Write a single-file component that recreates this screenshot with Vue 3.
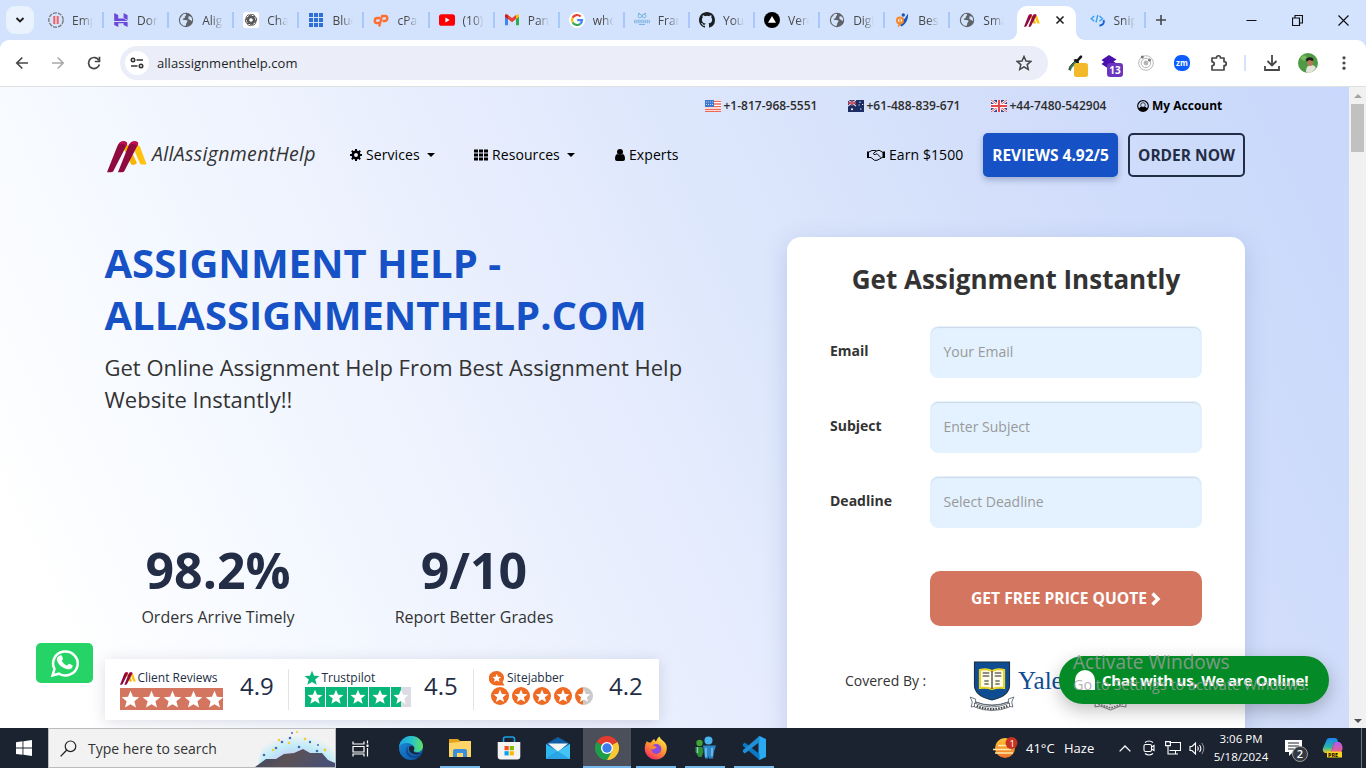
<script setup>
const tabs = [
  { icon: 'pause', label: 'Emp' },
  { icon: 'hostinger', label: 'Dom' },
  { icon: 'globe', label: 'Align' },
  { icon: 'gpt', label: 'Chat' },
  { icon: 'grid', label: 'Blue' },
  { icon: 'cpanel', label: 'cPan' },
  { icon: 'youtube', label: '(10)' },
  { icon: 'gmail', label: 'Pane' },
  { icon: 'google', label: 'who' },
  { icon: 'franken', label: 'Fran' },
  { icon: 'github', label: 'Your' },
  { icon: 'vercel', label: 'Verc' },
  { icon: 'globe', label: 'Digi' },
  { icon: 'pb', label: 'Best' },
  { icon: 'globe', label: 'Sma' },
  { icon: 'brand', label: '', active: true },
  { icon: 'snip', label: 'Snip' },
]
const phones = [
  { flag: 'us', text: '+1-817-968-5551' },
  { flag: 'au', text: '+61-488-839-671' },
  { flag: 'gb', text: '+44-7480-542904' },
]
const fields = [
  { label: 'Email', hint: 'Your Email' },
  { label: 'Subject', hint: 'Enter Subject' },
  { label: 'Deadline', hint: 'Select Deadline' },
]
const apps = [
  { icon: 'edge' },
  { icon: 'explorer', open: true },
  { icon: 'store' },
  { icon: 'mail' },
  { icon: 'chrome', open: true, current: true },
  { icon: 'firefox', open: true },
  { icon: 'people', open: true },
  { icon: 'vscode', open: true },
]
</script>

<template>
  <div class="screen">
    <svg class="sprite" width="0" height="0" aria-hidden="true">
      <defs>
        <linearGradient id="edgeG" x1="0" y1="0" x2="1" y2="0"><stop offset="0" stop-color="#1aa3e8" /><stop offset=".55" stop-color="#2cc4c9" /><stop offset="1" stop-color="#5fe05a" /></linearGradient>
        <linearGradient id="edgeB" x1="0" y1="0" x2="1" y2="1"><stop offset="0" stop-color="#1b8fdc" /><stop offset="1" stop-color="#0c4f9e" /></linearGradient>
        <linearGradient id="ffG" x1=".8" y1="0" x2=".2" y2="1"><stop offset="0" stop-color="#fff04a" /><stop offset=".45" stop-color="#ff9a2b" /><stop offset="1" stop-color="#f4246b" /></linearGradient>
        <linearGradient id="sunG" x1="0" y1="0" x2="0" y2="1"><stop offset="0" stop-color="#ffc636" /><stop offset="1" stop-color="#f0702c" /></linearGradient>
        <linearGradient id="copA" x1="0" y1="0" x2="0" y2="1"><stop offset="0" stop-color="#1a86f2" /><stop offset=".6" stop-color="#28b5a5" /><stop offset="1" stop-color="#e9c82a" /></linearGradient>
        <linearGradient id="copB" x1="0" y1="0" x2="0" y2="1"><stop offset="0" stop-color="#b05cf0" /><stop offset="1" stop-color="#f0607a" /></linearGradient>
        <radialGradient id="skyG" cx=".5" cy=".8" r=".7"><stop offset="0" stop-color="#c9a9ee" /><stop offset=".5" stop-color="#c3c9f6" /><stop offset=".78" stop-color="#c2edf8" /><stop offset="1" stop-color="#f2f2f2" /></radialGradient>
        <linearGradient id="hillG" x1="0" y1="0" x2="1" y2=".2"><stop offset="0" stop-color="#3c4663" /><stop offset=".5" stop-color="#5b5256" /><stop offset="1" stop-color="#4a5073" /></linearGradient>
      </defs>
      <symbol id="i-pause" viewBox="0 0 16 16"><circle cx="8" cy="8" r="7.2" fill="none" stroke="#777" stroke-width="1.3" stroke-dasharray="4 1.1" /><path d="M6.3 4v8M9.7 4v8" stroke="#f26161" stroke-width="2" /></symbol>
      <symbol id="i-hostinger" viewBox="0 0 16 16"><path d="M1.2 1l4 2v3.6h5.3L14.8 9H1.2zM10.6 1l4 2.200V8l-4-2zM1.200 9.900h13.400V15l-4-2v-1.700H5.300V15l-4.100-2z" fill="#6b48d8" /></symbol>
      <symbol id="i-globe" viewBox="0 0 16 16"><circle cx="8" cy="8" r="7.200" fill="#5f6368" /><path d="M7 1.800c2 .4 1 2 .2 2.400-1 .5.2 1.200-.6 1.900-.8.600-2 .4-1.700 1.600l3.800.6c1.100.2 1 1.600.1 2.100-.8.500-.5 2.400-1.400 3.700C4 13.800 2 11 2 8c0-1.600.8-3 1.800-4.100.7-.4 1-1.900 3.200-2.100zM10.500 4.500c1-.5 2-.1 2.900.7.6 1 .8 2.600.6 3.600-.9.600-1.200-.9-2.200-1-1-.1-1.800-1.200-1.300-3.300z" fill="#d3e3fd" /></symbol>
      <symbol id="i-gpt" viewBox="0 0 16 16"><rect width="16" height="16" rx="2.500" fill="#fff" /><g fill="none" stroke="#444" stroke-width=".8"><rect x="5.800" y="2.300" width="6" height="9" rx="3" /><rect x="5.800" y="2.300" width="6" height="9" rx="3" transform="rotate(60 8 8)" /><rect x="5.800" y="2.300" width="6" height="9" rx="3" transform="rotate(120 8 8)" /><rect x="5.800" y="2.300" width="6" height="9" rx="3" transform="rotate(180 8 8)" /><rect x="5.800" y="2.300" width="6" height="9" rx="3" transform="rotate(240 8 8)" /><rect x="5.800" y="2.300" width="6" height="9" rx="3" transform="rotate(300 8 8)" /></g></symbol>
      <symbol id="i-grid" viewBox="0 0 16 16"><path d="M1 1h4v4H1zM6 1h4v4H6zM11 1h4v4h-4zM1 6h4v4H1zM6 6h4v4H6zM11 6h4v4h-4zM1 11h4v4H1zM6 11h4v4H6zM11 11h4v4h-4z" fill="#2f70d6" /></symbol>
      <symbol id="i-cpanel" viewBox="0 0 16 16"><g fill="none" stroke="#ff6c2c" stroke-width="2.300" stroke-linejoin="round"><path d="M7 6H4C1.500 6 .7 11 3.300 11H6" /><path d="M6.200 14.500L9 4h3.200c3.300 0 2.600 5-.7 5H9.500" /></g></symbol>
      <symbol id="i-youtube" viewBox="0 0 16 16"><rect y="2.300" width="16" height="11.500" rx="2.600" fill="#f00" /><path d="M6.400 5.500v5L10.700 8z" fill="#fff" /></symbol>
      <symbol id="i-gmail" viewBox="0 0 16 16"><path d="M1 4v9.300h3V6z" fill="#4285f4" /><path d="M15 4v9.300h-3V6z" fill="#34a853" /><path d="M1 5.500V3.800C1 2 3 2 4 3l4 3 4-3v4L8 10.300 4 7z" fill="#ea4335" /><path d="M1 3.800C1 2.200 3 2 4 3v4L1 5z" fill="#c5221f" /><path d="M15 3.800C15 2.200 13 2 12 3v4l3-2z" fill="#fbbc04" /></symbol>
      <symbol id="i-google" viewBox="0 0 16 16"><circle cx="8" cy="8" r="8" fill="#fff" /><g fill="none" stroke-width="2.200"><path d="M11.600 4.500A5 5 0 0 0 3.600 5.700" stroke="#ea4335" /><path d="M3.600 5.700A5 5 0 0 0 3.700 10.500" stroke="#fbbc05" /><path d="M3.700 10.500A5 5 0 0 0 11.300 11.800" stroke="#34a853" /><path d="M11.300 11.800A5 5 0 0 0 13 8.200H8.200" stroke="#4285f4" /></g></symbol>
      <symbol id="i-franken" viewBox="0 0 16 16"><g fill="none" stroke="#69a7d8" stroke-width="1" opacity=".8"><circle cx="5.800" cy="4" r="1.800" /><circle cx="10.200" cy="4" r="1.800" /><path d="M4 1.500h2M10 1.500h2M5 12.500h6" /><path d="M0 9.500h16" stroke-width="3.400" stroke-dasharray="1.500 .6" opacity=".85" /></g></symbol>
      <symbol id="i-github" viewBox="0 0 16 16"><path d="M8 0C3.580 0 0 3.580 0 8c0 3.540 2.290 6.530 5.470 7.590.4.070.55-.17.55-.38 0-.19-.01-.82-.01-1.490-2.010.37-2.530-.49-2.690-.94-.09-.23-.48-.94-.82-1.130-.28-.15-.68-.52-.01-.53.63-.01 1.080.58 1.230.82.72 1.210 1.870.87 2.330.66.070-.52.28-.87.51-1.070-1.780-.2-3.640-.89-3.640-3.950 0-.87.31-1.590.82-2.150-.08-.2-.36-1.020.08-2.120 0 0 .67-.21 2.200.82a7.600 7.600 0 0 1 4 0c1.530-1.040 2.200-.82 2.200-.82.44 1.100.16 1.920.08 2.120.51.56.82 1.270.82 2.150 0 3.070-1.870 3.750-3.650 3.950.29.25.54.73.54 1.480 0 1.070-.01 1.930-.01 2.200 0 .21.15.46.55.38A8.010 8.010 0 0 0 16 8c0-4.420-3.580-8-8-8z" fill="#1b1f24" /></symbol>
      <symbol id="i-vercel" viewBox="0 0 16 16"><circle cx="8" cy="8" r="8" /><path d="M8 4l4 6.800H4z" fill="#fff" /></symbol>
      <symbol id="i-pb" viewBox="0 0 16 16"><path d="M8 6l2.500 1L14 1.500c.5 6-2 10.500-6.500 13L6 13z" fill="#1d57b5" /><circle cx="9.300" cy="3" r="1.700" fill="#1d57b5" /><circle cx="6" cy="8.500" r="3" fill="#fff" stroke="#f5862b" stroke-width="2" /><path d="M6 7v5l-2 2.500" fill="none" stroke="#f5862b" stroke-width="1.500" /></symbol>
      <symbol id="i-brand" viewBox="0 0 102 94" preserveAspectRatio="none"><path d="M42 20l12-10 22 54q-2 7-14 6z" fill="#f7b500" /><path d="M66 18q8-14 18-2l17 53H89Q84 69 82 60z" fill="#ffc20e" /><path d="M0 92L26 16Q31 0 44 1q9 2 7 9L16 89q-2 3-6 3z" fill="#8f0a3f" /><path d="M28 92L54 16Q59 0 72 1q9 2 7 9L44 89q-2 3-6 3z" fill="#8f0a3f" /><path d="M29 11Q34 0 44 1q9 2 7 9l-2 5q-7-10-20-4zM57 11Q62 0 72 1q9 2 7 9l-2 5q-7-10-20-4z" fill="#bd0f52" /></symbol>
      <symbol id="i-snip" viewBox="0 0 16 16"><g fill="none" stroke="#38a0f5" stroke-width="1.400"><path d="M4.200 4L1.200 6.700l3 2.600M7.800 3L6 10.500M9.500 4l3 2.700-3 2.600" /><path d="M13.500 8c1.500 3.500-1 5-4 5.700" stroke="#1764d8" stroke-width="2" /></g></symbol>
      <symbol id="i-star" viewBox="0 0 20 20"><path d="M10 .8l2.600 6.300 6.700.5-5.200 4.300 1.700 6.600L10 14.900l-5.800 3.600 1.700-6.600L.7 7.600l6.700-.5z" fill="currentColor" /></symbol>
      <symbol id="i-edge" viewBox="0 0 24 24"><circle cx="12" cy="12" r="12" fill="url(#edgeB)" /><path d="M0 11C1 4 6 0 12 0c7 0 12 5 12 10 0 4-3 6-6 6-3 0-4-1-3-2.500C16 11 13 7 8.500 7 4 7 1 9 0 11z" fill="url(#edgeG)" /><path d="M10 9.500C6.500 13 9 20 16 20c2.500 0 4.500-1 6-2-1 2-2 3-3 3.500-6 1.500-11.500-1-12-6 0-3 1-5 3-6z" fill="#0d3e86" opacity=".75" /><path d="M10.500 10.500c-2 4 1.500 8 7 8 2.500 0 4.500-1 5.500-2-1 1.500-3 .500-5 .400-3.500-.2-4-2-2.800-3.400.7-1-.3-3.500-2.200-3.700-1 0-2 .2-2.500.7z" fill="#1c2433" /></symbol>
      <symbol id="i-explorer" viewBox="0 0 24 24"><path d="M1 3h9l2 2h11v16H1z" fill="#e3a21a" /><path d="M1 7l10-1 2-1h10v16H1z" fill="#ffd567" /><path d="M5 21v-6q0-2 2-2h10q2 0 2 2v6h-4v-4H9v4z" fill="#3b8fdc" /></symbol>
      <symbol id="i-store" viewBox="0 0 24 24"><path d="M6.500 7V3q0-2 2-2h7q2 0 2 2v4" fill="none" stroke="#1ba0e8" stroke-width="1.600" /><path d="M.7 6h22.600v14.500q0 3-3 3H3.700q-3 0-3-3z" fill="#f3f3f3" /><path d="M7.500 10h4.200v4.200H7.500z" fill="#f25022" /><path d="M12.700 10h4.200v4.200h-4.200z" fill="#7fba00" /><path d="M7.500 15.200h4.200v4.200H7.500z" fill="#00a4ef" /><path d="M12.700 15.200h4.200v4.200h-4.200z" fill="#ffb900" /></symbol>
      <symbol id="i-mail" viewBox="0 0 24 24"><path d="M0 8l12-7 12 7v15H0z" fill="#0f5fa8" /><path d="M2 7.500h20L12 16z" fill="#f4f4f4" /><path d="M0 8l12 7.500L0 23z" fill="#2fb6ee" /><path d="M24 8v15H0l12-7.500z" fill="#2ba5e6" /><path d="M24 8v15L12 15.500z" fill="#43c4f5" /></symbol>
      <symbol id="i-chrome" viewBox="0 0 24 24"><path d="M12 12L1.600 6A12 12 0 0 1 22.400 6z" fill="#e33b2e" /><path d="M12 12L22.400 6A12 12 0 0 1 12 24z" fill="#fcc934" /><path d="M12 12v0L12 24A12 12 0 0 1 1.600 6z" fill="#1e9e4a" /><path d="M12 12L17.200 15 12 24z" fill="#1e9e4a" /><circle cx="12" cy="12" r="6" fill="#fff" /><circle cx="12" cy="12" r="4.700" fill="#3b7ded" /></symbol>
      <symbol id="i-firefox" viewBox="0 0 24 24"><path d="M3 5c.6 1.500 2 1.500 4 1.500C8 4.500 9 3.500 10.500 3c0 1.200.5 2 1.500 2.500C13 3 14 1.500 15.500.5 16 3.500 21 5 22.500 9.500 24 17 19.500 23.500 12 23.500S-.5 17 1 10c.2-2 1-3 2-5z" fill="url(#ffG)" /><circle cx="12.300" cy="13" r="5" fill="#8a49e0" /><path d="M6 10c3-1 5 0 7 1.500-2 .5-2.500 2-5 2z" fill="#ff8a2b" /></symbol>
      <symbol id="i-people" viewBox="0 0 24 24"><circle cx="6.500" cy="7" r="3.200" fill="#3fa535" /><path d="M2.500 11h7l1 5-2 5h-3l-3-5z" fill="#2e8b36" /><circle cx="15.500" cy="4.500" r="4" fill="#4ab4ee" /><path d="M10 9.500h13l-2 6-1 7h-4l-.5-3-.5 3h-3l-1-7z" fill="#2d87c8" /><path d="M4.500 11v6M13 12v9M19 12v8" stroke="#a5ddf7" stroke-width="1.300" opacity=".8" /></symbol>
      <symbol id="i-vscode" viewBox="0 0 24 24"><path d="M17.500 0L24 3v18l-6.500 3-1-1V1z" fill="#29a9f2" /><path d="M.8 8.200l2-1.700L17.500 18v6L.8 9.800z" fill="#0a78c4" /><path d="M.8 15.800l2 1.700L17.500 6V0L.8 14.200z" fill="#1f90d8" /></symbol>
    </svg>

    <header class="tabstrip">
      <button class="tab-search"><svg width="10" height="10" viewBox="0 0 10 10"><path d="M1.500 3l3.500 3.500L8.500 3" fill="none" stroke="#1f1f1f" stroke-width="1.900" /></svg></button>
      <div v-for="(t, i) in tabs" :key="i" class="tab" :class="{ active: t.active, quiet: i === 14 }">
        <svg class="favicon"><use :href="'#i-' + t.icon" /></svg>
        <svg v-if="t.active" class="tab-close" width="10" height="10" viewBox="0 0 10 10"><path d="M1.500 1.500l7 7M8.500 1.500l-7 7" stroke="#1f1f1f" stroke-width="1.600" /></svg>
        <span v-else class="tab-label">{{ t.label }}</span>
      </div>
      <svg class="new-tab" width="12" height="12" viewBox="0 0 12 12"><path d="M6 1v10M1 6h10" stroke="#474747" stroke-width="1.600" /></svg>
      <div class="win-controls">
        <svg width="11" height="11" viewBox="0 0 11 11"><path d="M.5 5.500h10" stroke="#111" /></svg>
        <svg width="11" height="11" viewBox="0 0 11 11"><path d="M.5 3h7v7.500h-7zM3 3V.5h7.500V8H7.500" fill="none" stroke="#111" stroke-width="1.200" /></svg>
        <svg width="11" height="11" viewBox="0 0 11 11"><path d="M.5.5l10 10M10.500.5l-10 10" stroke="#111" stroke-width="1.200" /></svg>
      </div>
    </header>

    <div class="toolbar-wrap">
      <div class="toolbar">
        <div class="nav-buttons">
          <svg width="14" height="14" viewBox="0 0 14 14"><path d="M13 7H2M7.300 1.500L1.800 7l5.500 5.500" fill="none" stroke="#474747" stroke-width="1.700" /></svg>
          <svg width="14" height="14" viewBox="0 0 14 14"><path d="M1 7h11M6.700 1.500L12.200 7l-5.500 5.500" fill="none" stroke="#a9a9ac" stroke-width="1.600" /></svg>
          <svg width="14" height="14" viewBox="0 0 14 14"><path d="M12 4.500A5.500 5.500 0 1 0 12.400 8.500" fill="none" stroke="#474747" stroke-width="1.700" /><path d="M12.500.8v4.700H7.800" fill="none" stroke="#474747" stroke-width="1.700" /></svg>
        </div>
        <div class="address">
          <span class="site-info"><svg width="14" height="12" viewBox="0 0 14 12"><g fill="none" stroke="#333" stroke-width="1.600"><circle cx="3" cy="3" r="1.700" /><path d="M6.500 3H13M1 9h6.500" /><circle cx="11" cy="9" r="1.700" /></g></svg></span>
          <span class="url">allassignmenthelp.com</span>
          <svg class="bookmark" width="16" height="16" viewBox="0 0 16 16"><path d="M8 1.500l2 4.500 4.900.4-3.700 3.200 1.100 4.800L8 11.900l-4.300 2.500 1.100-4.800L1.100 6.400 6 6z" fill="none" stroke="#474747" stroke-width="1.500" /></svg>
        </div>
        <div class="extensions">
          <svg width="20" height="22" viewBox="0 0 20 22"><path d="M1 15c0-3 1-4 6-9l2 2c-5 4-6 6-6 8z" fill="#3e7a55" /><path d="M1 15c0-3 1-4 6-9" stroke="#333" fill="none" /><path d="M5.500 5l1.500-1 2 .2L12 .7c2-1 3 1 1.600 2.300L10.700 6l.3 2-1.300 1z" fill="#151515" /><rect x="6" y="8" width="14" height="14" rx="2.500" fill="#f2b92b" /></svg>
          <span class="ext-badge"><svg width="16" height="14" viewBox="0 0 16 14"><path d="M8 0l7.500 4.500-3 2L15 8l-7 6L.5 9 3 7 .5 5z" fill="#4a10ad" /></svg><b>13</b></span>
          <svg width="16" height="16" viewBox="0 0 16 16"><g fill="none" stroke="#b8b8b8"><circle cx="8" cy="8" r="7.300" /><circle cx="8" cy="8" r="4.700" /></g><circle cx="8" cy="8" r="2.400" fill="#b5b5b5" /><circle cx="4.300" cy="1.900" r="1.500" fill="#777" /><circle cx="11.500" cy="5" r="1.500" fill="#777" /></svg>
          <span class="zoom">zm</span>
          <svg width="18" height="18" viewBox="0 0 18 18"><path d="M2 4h4.500c0-3 4-3 4 0H14v3.700c3 0 3 4 0 4V16H2v-4.200c3-.3 3-3.700 0-4z" fill="none" stroke="#474747" stroke-width="1.700" stroke-linejoin="round" /></svg>
          <i class="ext-rule"></i>
          <svg width="16" height="16" viewBox="0 0 16 16"><path d="M8 0v10M3.500 6L8 10.500 12.500 6M1 11v4h14v-4" fill="none" stroke="#474747" stroke-width="1.800" /></svg>
          <svg width="20" height="20" viewBox="0 0 20 20"><circle cx="10" cy="10" r="10" fill="#4e9a45" /><path d="M8 19c0-5 2-7 5-7s4 1 5 3c-2 3-5 5-8 5z" fill="#e4e4dc" /><path d="M2 5l4-3 3 2-3 4z" fill="#79bd5f" /><ellipse cx="12" cy="9" rx="3" ry="4" fill="#b5785a" /><path d="M8 7c0-3 7-4 7.500 0l-1 1-3-1-2 1-.5 1z" fill="#211a17" /></svg>
          <svg width="4" height="14" viewBox="0 0 4 14"><g fill="#474747"><circle cx="2" cy="1.800" r="1.600" /><circle cx="2" cy="7" r="1.600" /><circle cx="2" cy="12.200" r="1.600" /></g></svg>
        </div>
      </div>
    </div>

    <div class="viewport">
      <main class="page">
        <div class="container">
          <div class="contact-bar">
            <span v-for="p in phones" :key="p.text" class="phone">
              <svg width="16" height="12" viewBox="0 0 16 12">
                <g v-if="p.flag === 'us'"><rect width="16" height="12" fill="#fff" /><path d="M0 1.300h16M0 4h16M0 6.700h16M0 9.300h16M0 11.500h16" stroke="#ea6a5c" stroke-width="1.300" /><rect width="9" height="7" fill="#3b76cf" /><path d="M1 2h7M1 4.500h7" stroke="#bcd3f3" stroke-dasharray="1 1" /></g>
                <g v-else-if="p.flag === 'au'"><rect width="16" height="12" fill="#1d2c63" /><path d="M0 0l8 6M8 0L0 6" stroke="#d9dcec" stroke-width="1.100" /><path d="M4 0v6M0 3h8" stroke="#d8495c" stroke-width="1.300" /><circle cx="4" cy="9.300" r="1" fill="#fff" /><path d="M12 1.500v1.500M10.500 5h1.200M14 4.500h1.200M12 9h1.500" stroke="#dfe4f4" /></g>
                <g v-else><rect width="16" height="12" fill="#34468f" /><path d="M0 0l16 12M16 0L0 12" stroke="#fff" stroke-width="2.600" /><path d="M0 0l16 12M16 0L0 12" stroke="#e4545b" /><path d="M8 0v12M0 6h16" stroke="#fff" stroke-width="4" /><path d="M8 0v12M0 6h16" stroke="#e8484c" stroke-width="2.200" /></g>
              </svg><span>{{ p.text }}</span>
            </span>
            <a class="account"><svg width="12" height="12" viewBox="0 0 12 12"><circle cx="6" cy="6" r="5.300" fill="none" stroke="#000" stroke-width="1.200" /><path d="M1.500 9q1-2 2.500-2.300h4Q9.500 7 10.500 9L8.500 11h-5z" /><circle cx="6" cy="5" r="2.300" fill="#d5e0fb" stroke="#000" stroke-width=".7" /></svg><span>My Account</span></a>
          </div>

          <nav class="navbar">
            <a class="logo"><svg width="40" height="32"><use href="#i-brand" /></svg><em>AllAssignmentHelp</em></a>
            <a class="menu services"><svg width="12" height="12" viewBox="0 0 12 12"><circle cx="6" cy="6" r="3.200" fill="none" stroke="#000" stroke-width="2.500" /><path d="M6 0v2.500M6 9.500V12M0 6h2.500M9.500 6H12M1.800 1.800l1.700 1.700M8.500 8.500l1.700 1.700M10.200 1.800L8.500 3.500M3.500 8.500l-1.700 1.700" stroke="#000" stroke-width="2" /></svg><span>Services</span><i></i></a>
            <a class="menu resources"><svg width="14" height="12" viewBox="0 0 14 12"><path d="M0 .5h4v3H0zM5 .5h4v3H5zM10 .5h4v3h-4zM0 4.500h4v3H0zM5 4.500h4v3H5zM10 4.500h4v3h-4zM0 8.500h4v3H0zM5 8.500h4v3H5zM10 8.500h4v3h-4z" /></svg><span>Resources</span><i></i></a>
            <a class="menu experts"><svg width="10" height="12" viewBox="0 0 10 12"><circle cx="5" cy="3" r="3" /><path d="M2 5q3 2 6 0 2 1 2 5 0 2-2 2H2q-2 0-2-2 0-4 2-5z" /></svg><span>Experts</span></a>
            <a class="menu earn"><svg width="18" height="12" viewBox="0 0 18 12"><path d="M0 2.500h2v6.500H0zM16 2.500h2v6.500h-2z" /><path d="M2 3L5 1.500h3l1.500.5L12 1.200l4 2.300v4.500L12.500 10 10 11.300H7.500L4 8.500H2M9.500 2L6.500 4.200q0 2 2 1.300L10 4.700l4 4" fill="none" stroke="#000" stroke-width="1" /></svg><span>Earn $1500</span></a>
            <a class="btn reviews">REVIEWS 4.92/5</a>
            <a class="btn order">ORDER NOW</a>
          </nav>

          <div class="hero">
            <section class="pitch">
              <h1>ASSIGNMENT HELP -<br />ALLASSIGNMENTHELP.COM</h1>
              <p class="lead">Get Online Assignment Help From Best Assignment Help<br />Website Instantly!!</p>
              <div class="stats">
                <div><strong>98.2%</strong><span>Orders Arrive Timely</span></div>
                <div><strong>9/10</strong><span>Report Better Grades</span></div>
              </div>
              <div class="ratings">
                <div class="rating client">
                  <div class="source">
                    <div class="name"><svg width="16" height="13"><use href="#i-brand" /></svg>Client Reviews</div>
                    <div class="stars red"><svg v-for="n in 5" :key="n"><use href="#i-star" /></svg></div>
                  </div>
                  <b>4.9</b>
                </div>
                <div class="rating trust">
                  <div class="source">
                    <div class="name"><svg class="green-star" width="16" height="16"><use href="#i-star" /></svg>Trustpilot</div>
                    <div class="stars green"><span v-for="n in 5" :key="n" :class="{ half: n === 5 }"><svg><use href="#i-star" /></svg></span></div>
                  </div>
                  <b>4.5</b>
                </div>
                <div class="rating jabber">
                  <div class="source">
                    <div class="name"><svg width="16" height="15" viewBox="0 0 16 15"><path d="M7.500 0a7.500 6.900 0 0 1 6 11l2 3.500h-8a7.500 7 0 0 1 0-14.500z" fill="#ef6a23" /><use class="pip" href="#i-star" x="3" y="2.300" width="9.500" height="9.500" /></svg>Sitejabber</div>
                    <div class="stars orange"><span v-for="n in 5" :key="n" :class="{ half: n === 5 }"><svg><use href="#i-star" /></svg></span></div>
                  </div>
                  <b>4.2</b>
                </div>
              </div>
            </section>

            <section class="quote-card">
              <h2>Get Assignment Instantly</h2>
              <div v-for="f in fields" :key="f.label" class="field"><label>{{ f.label }}</label><div class="input">{{ f.hint }}</div></div>
              <div class="submit"><span>GET FREE PRICE QUOTE</span><svg width="11" height="14" viewBox="0 0 11 14"><path d="M2.500 1.500L8 7l-5.500 5.500" fill="none" stroke="#fff" stroke-width="3.400" /></svg></div>
              <div class="covered">
                <span>Covered By :</span>
                <svg width="46" height="50" viewBox="0 0 42 50" preserveAspectRatio="none"><path d="M5 1h32v23q0 11-16 15Q5 35 5 24z" fill="#0f4d92" stroke="#173044" /><path d="M10 9q6-2 11 1 5-3 11-1v18q-6-1-11 1-5-2-11-1z" fill="#fffde9" stroke="#e9d327" stroke-width="2" /><path d="M21 10v18M12.500 12h6M12.500 15h6M23.500 12h6M23.500 15h6M14 20h4M24 20h4M14 23h4M24 23h4" stroke="#222" stroke-width="1" /><path d="M1 36l2 5-1 5 4-1v-4q15 7 30 0v4l4 1-1-5 2-5-5 2v3q-15 6-30 0v-3z" fill="#fff" stroke="#56606a" stroke-width=".8" /><path d="M5 42q15 8 32 0v4q-16 7-32 0z" fill="#fff" stroke="#56606a" stroke-width=".8" /><path d="M7 45q14 6 28 0" fill="none" stroke="#444" stroke-width="2" stroke-dasharray="1.500 1" /></svg>
                <span class="yale">Yale</span>
                <svg class="crest" width="33" height="22" viewBox="0 0 30 22" preserveAspectRatio="none"><path d="M1 10l4 3v-5h20v5l4-3v8l-5-1-9 4-9-4-5 1z" fill="#fff" stroke="#777" stroke-width=".9" /><path d="M4 15l11 4 11-4M7 12l8 3 8-3" fill="none" stroke="#777" stroke-dasharray="1.500 1" stroke-width="1.500" /></svg>
              </div>
            </section>
          </div>
        </div>
      </main>
      <aside class="scrollbar"><i class="arrow up"></i><span class="thumb"></span><i class="arrow down"></i></aside>
    </div>

    <a class="whatsapp"><svg width="30" height="30" viewBox="0 0 30 30"><path d="M2.500 27.500l2-6.500A12.300 12 0 1 1 9 25.700z" fill="none" stroke="#fff" stroke-width="2.500" /><path d="M10 7.500c2-1 2 .5 3 3 .3 1-1.500 1.700-1 2.500 1.200 2.200 2.500 3.500 5 4.500.7.200 1.500-2 2.300-1.700 3.500 1.700 4 1.500 3 3.500-1 2-3.500 2.500-6 1.700-5-1.700-7-4-9-7.500-1.200-2.500-.3-5 2.700-6z" fill="#fff" /></svg></a>
    <div class="chat"><svg width="20" height="20" viewBox="0 0 20 20"><path d="M0 14v-4a10 10 0 0 1 20 0v10H6q-6 0-6-6z" fill="#fff" /></svg>Chat with us, We are Online!</div>
    <div class="watermark"><p>Activate Windows</p><small>Go to Settings to activate Windows.</small></div>

    <footer class="taskbar">
      <div class="start"><svg width="16" height="16" viewBox="0 0 16 16"><path d="M0 2.200l6.500-.9v6.300H0zM7.400 1.200L16 0v7.600H7.400zM0 8.500h6.500v6.200L0 13.900zM7.400 8.500H16V16l-8.600-1.200z" fill="#fff" /></svg></div>
      <div class="search">
        <svg width="17" height="17" viewBox="0 0 17 17"><circle cx="10.500" cy="6.300" r="5.300" fill="none" stroke="#222" stroke-width="1.200" /><path d="M6.800 10L.6 16.400" stroke="#222" stroke-width="1.300" /></svg>
        <span>Type here to search</span>
        <svg class="art" width="80" height="38" viewBox="0 0 80 38"><ellipse cx="42" cy="32" rx="38" ry="32" fill="url(#skyG)" /><path d="M0 38l11-8 10 0 8-5 10-1 9-4 7 4 12 0 6 7 7 3v4z" fill="url(#hillG)" /><g fill="#4667b4"><circle cx="9" cy="26" r="1.300" /><circle cx="21" cy="19" r="1.300" /><circle cx="27" cy="13" r="1.300" /><circle cx="35" cy="9" r="1.300" /><circle cx="44" cy="18" r="1.300" /><circle cx="55" cy="13" r="1.200" /><circle cx="62" cy="22" r="1.300" /><circle cx="63" cy="16" r="1" /><circle cx="37" cy="4" r="1" /></g><g fill="#f3cb31"><circle cx="18" cy="21" r="1.200" /><circle cx="24" cy="11" r="1.200" /><circle cx="34" cy="14" r="1.200" /><circle cx="50" cy="10" r="1.300" /><circle cx="70" cy="21" r="1.400" /><circle cx="42" cy="3" r="1" /></g></svg>
      </div>
      <div class="task-view"><svg width="17" height="17" viewBox="0 0 17 17"><path d="M1 1.500V4h11V1.500M1 6.500h11v5.500H1zM1 16.500V14h11v2.500M15.500.5v3M15.500 8v8.500" fill="none" stroke="#fff" stroke-width="1.200" /><rect x="14.500" y="4.500" width="2" height="2.500" fill="#fff" /></svg></div>
      <div v-for="a in apps" :key="a.icon" class="app" :class="{ open: a.open, current: a.current }"><svg width="24" height="24"><use :href="'#i-' + a.icon" /></svg></div>
      <div class="tray">
        <svg class="weather" width="25" height="22" viewBox="0 0 25 22"><circle cx="12" cy="11" r="10" fill="url(#sunG)" /><path d="M0 12.500h18M2 16h18M5 8.500h10" stroke="#ffe9a8" stroke-width="1.300" /><circle cx="18.500" cy="6" r="6" fill="#c93122" /><text x="16.500" y="9.500" font-size="9.500" fill="#fff" font-family="Open Sans, sans-serif">1</text></svg>
        <span class="temp">41°C</span><span class="haze">Haze</span>
        <svg class="caret" width="12" height="7" viewBox="0 0 12 7"><path d="M.6 6.400L6 1l5.400 5.400" fill="none" stroke="#fff" stroke-width="1.300" /></svg>
        <svg class="meet" width="12" height="16" viewBox="0 0 12 16"><g fill="none" stroke="#fff" stroke-width="1.100"><path d="M2 2.500q4-3 8 0M2 13.500q4 3 8 0" /><rect x="1" y="4.500" width="7.500" height="7" rx="1.500" /><path d="M8.500 7L11 5.500v5L8.500 9" /></g></svg>
        <svg class="network" width="16" height="14" viewBox="0 0 16 14"><g fill="none" stroke="#fff" stroke-width="1.100"><path d="M4.500 1.500h11v8h-11M8 13h5M10.500 10v3M3 5v8h5" /><path d="M.6.600h4.800v4H.6z" /></g></svg>
        <svg class="volume" width="16" height="13" viewBox="0 0 16 13"><g fill="none" stroke="#fff" stroke-width="1.100"><path d="M1 4.500h2L6.500 1v11L3 8.500H1zM8.500 4.500q1.500 2 0 4M10.500 3q2.700 3.500 0 7" /><path d="M12.800 1q4 5.500 0 11" stroke="#858b96" /></g></svg>
        <div class="clock"><span>3:06 PM</span><span>5/18/2024</span></div>
        <div class="notice"><svg width="17" height="16" viewBox="0 0 17 16"><path d="M0 0h17v12H8l-4 4v-4H0z" fill="#fff" /><path d="M3 3h11M3 6h11M3 9h6" stroke="#1c2433" /></svg><b>2</b></div>
        <svg class="copilot" width="21" height="20" viewBox="0 0 21 20"><path d="M5 1Q6 0 8 0h5q2 0 2.500 2L16 4h-2q-2 0-2.500 2L9 15H3Q0 14 1 10z" fill="url(#copA)" /><path d="M14 4h3q3 1 3.500 5T17 15H9l2.500-9Q12 4 14 4z" fill="url(#copB)" /><rect x="5" y="13.500" width="15" height="6" fill="#ffd21f" /><text x="6" y="18.700" font-size="5.500" font-weight="700" font-family="Open Sans, sans-serif">PRE</text></svg>
        <i class="peek"></i>
      </div>
    </footer>
  </div>
</template>

<style>
body { margin: 0; overflow: hidden; }
</style>

<style scoped>
* { box-sizing: border-box; }
.screen { position: relative; width: 1366px; height: 768px; display: flex; flex-direction: column; overflow: hidden; font-family: "Open Sans", "Noto Sans", sans-serif; color: #333; }
.sprite { position: absolute; }
svg { display: block; flex: none; }
h1, h2, p { margin: 0; }

.tabstrip { height: 40px; flex: none; background: #d3e3fd; display: flex; align-items: center; padding-left: 6px; }
.tab-search { width: 28px; height: 28px; border: 0; border-radius: 9px; background: #eaf2fe; display: grid; place-items: center; padding: 0; margin-right: 4px; }
.tab { position: relative; width: 65.1px; flex: none; height: 28px; display: flex; align-items: center; padding-left: 10px; }
.tab::after { content: ""; position: absolute; right: -1px; top: 6px; width: 2px; height: 16px; background: #a8c7fa; }
.tab.quiet::after { display: none; }
.favicon { width: 16px; height: 16px; }
.tab-label { margin: 2px 0 0 8px; width: 21px; overflow: hidden; white-space: nowrap; font: 12px/18px "Open Sans", sans-serif; color: #474747; -webkit-mask-image: linear-gradient(90deg, #000 45%, transparent 100%); mask-image: linear-gradient(90deg, #000 45%, transparent 100%); }
.tab.active { align-self: flex-end; height: 34px; padding: 0 0 6px 10px; }
.tab.active::before { content: ""; position: absolute; left: 2.500px; width: 59px; top: 0; bottom: 0; background: #fff; border-radius: 10px 10px 0 0; }
.tab.active::after { left: -5.500px; right: auto; top: auto; bottom: 0; width: 75px; height: 8px; background: radial-gradient(circle at 0 0, transparent 7.500px, #fff 8px) 0 0 / 8px 8px no-repeat, radial-gradient(circle at 100% 0, transparent 7.500px, #fff 8px) 100% 0 / 8px 8px no-repeat; }
.tab.active .favicon, .tab-close { position: relative; }
.tab.active .favicon { height: 13px; }
.tab-close { margin-left: 15px; }
.new-tab { margin-left: 10px; }
.win-controls { margin-left: auto; display: flex; gap: 35px; padding-right: 17px; }

.toolbar-wrap { height: 47px; flex: none; background: #d3e3fd; }
.toolbar { height: 47px; background: #fff; border-radius: 9px 9px 0 0; border-bottom: 1px solid #dfe1e0; display: flex; align-items: center; padding-left: 15px; }
.nav-buttons { display: flex; gap: 22px; width: 105px; }
.address { width: 928px; height: 34px; border-radius: 17px; background: #ebeef8; display: flex; align-items: center; padding-left: 5px; }
.site-info { width: 24px; height: 24px; border-radius: 50%; background: #fff; display: grid; place-items: center; }
.url { margin-left: 8px; font-size: 13px; letter-spacing: .04px; color: #1f1f1f; }
.bookmark { margin-left: auto; margin-right: 16px; }
.extensions { display: flex; align-items: center; flex: 1; }
.extensions > :nth-child(1) { margin: 5px 13px 0 20px; }
.ext-badge { position: relative; width: 23px; height: 22px; margin: 6px 14px 0 0; }
.ext-badge b { position: absolute; left: 6px; top: 8px; width: 16px; height: 14px; border-radius: 3px; background: #6b35bd; color: #fff; font: 700 10px/14px "Open Sans", sans-serif; text-align: center; }
.zoom { width: 16px; height: 16px; border-radius: 7px; margin: 0 20px; background: #0b5cff; color: #fff; font: 700 8px/15px "Open Sans", sans-serif; text-align: center; }
.ext-rule { width: 2px; height: 16px; margin: 0 18px 0 16px; background: #d3e3fd; }
.extensions > :nth-child(8) { margin: 0 24px 0 18px; }

.viewport { height: 641px; flex: none; display: flex; }
.page { width: 1349px; overflow: hidden; background: linear-gradient(65deg, #fff 0%, #fff 6%, #f4f8ff 23%, #e7edfd 45%, #dde7fc 58%, #d1ddfa 80%, #c8d8fc 100%); }
.container { width: 1140px; margin: 0 0 0 105px; }
.contact-bar { height: 46px; padding: 0 23px 8px 0; display: flex; align-items: center; justify-content: flex-end; font-size: 12px; font-weight: 600; color: #2c2c2c; }
.phone { display: flex; align-items: center; gap: 2.500px; width: 143px; }
.phone:nth-child(3) { width: 146px; }
.account { display: flex; align-items: center; gap: 3px; width: 85px; color: #000; white-space: nowrap; font-weight: 700; }
.phone span, .account span, .menu span { margin-top: -2px; }
.account svg { margin-top: -1px; }
.navbar { height: 44px; display: flex; align-items: center; font-size: 14px; font-weight: 500; color: #000; }
.navbar a { white-space: nowrap; }
.logo { display: flex; align-items: center; width: 245px; padding-left: 2px; color: #333; }
.logo svg { margin-top: 3px; }
.logo em { font-size: 19.500px; letter-spacing: .33px; font-weight: 500; margin: -3px 0 0 5px; }
.menu { display: flex; align-items: center; gap: 4px; letter-spacing: .08px; }
.menu i { margin-left: 3px; border: 4px solid transparent; border-top-color: #000; border-bottom: 0; }
.services { width: 124px; }
.resources { width: 141px; }
.experts { width: 252px; }
.earn { width: 116px; }
.btn { height: 44px; border-radius: 5px; display: grid; place-items: center; font-size: 15.500px; font-weight: 700; }
.reviews { width: 135px; color: #fff; background: #1652c5; box-shadow: 0 3px 6px rgba(30, 50, 110, .3); }
.order { width: 117px; margin-left: 10px; border: 2px solid #232d45; color: #232d45; }

.hero { display: flex; margin-top: 60px; }
.pitch { width: 682px; flex: none; }
h1 { color: #1652c5; font-size: 40px; line-height: 52px; font-weight: 700; white-space: nowrap; margin-left: -.5px; }
.lead { margin: 10px 0 0 -.5px; font-size: 22px; line-height: 32px; white-space: nowrap; }
.stats { display: flex; margin: 125px 0 0 -15px; }
.stats > div { width: 256px; display: flex; flex-direction: column; align-items: center; }
.stats strong { font-size: 50px; line-height: 60px; font-weight: 700; color: #232d45; }
.stats span { font-size: 16px; line-height: 34px; }
.ratings { margin-top: 25px; width: 554px; height: 61px; background: #fff; box-shadow: 0 2px 14px rgba(60, 60, 100, .17); display: flex; align-items: center; }
.rating { height: 41px; display: flex; color: #232d45; }
.rating + .rating { border-left: 1px solid #e3e3e8; }
.client { width: 183px; padding-left: 15px; }
.trust { width: 185px; padding-left: 15px; }
.jabber { width: 186px; padding-left: 15px; }
.source { width: 120px; }
.name { height: 18px; font-size: 12px; line-height: 16px; display: flex; align-items: center; white-space: nowrap; gap: 1.500px; }
.jabber .name { gap: 2px; }
.rating b { font-size: 24px; line-height: 34px; font-weight: 500; }
.green-star { color: #08b67a; }
.pip { color: #fff; }
.stars { display: flex; color: #fff; }
.stars.red { background: #d4755f; width: 103px; height: 22px; align-items: center; gap: 2px; padding: 0 1px; margin-top: 1px; }
.stars.red svg { width: 19px; height: 19px; }
.stars.green { gap: 1px; width: 107px; margin-left: .5px; }
.stars.green span { width: 20.600px; height: 20px; background: #08b67a; display: grid; place-items: center; }
.stars.green span.half { background: linear-gradient(90deg, #08b67a 50%, #dcdce6 50%); }
.stars.green svg { width: 16px; height: 16px; }
.stars.orange { gap: 3px; margin-left: 2px; }
.stars.orange span { width: 18px; height: 18px; border-radius: 50%; background: #ef6a23; display: grid; place-items: center; }
.stars.orange span.half { background: linear-gradient(90deg, #ef6a23 45%, #c9c9c9 45%); }
.stars.orange svg { width: 14px; height: 14px; }

.quote-card { width: 458px; height: 560px; background: #fff; border-radius: 14px; padding: 24px 43px 0; box-shadow: 0 6px 22px rgba(90, 110, 180, .25); }
h2 { font-size: 26px; line-height: 36px; font-weight: 700; text-align: center; white-space: nowrap; margin-bottom: 29px; }
.field { display: flex; height: 75px; }
.field label { width: 100px; font-size: 14px; line-height: 50px; font-weight: 700; }
.input { width: 272px; height: 52px; border: 1px solid #e4f2ff; border-radius: 8px; background: #e4f2ff; box-shadow: inset 0 1px 1px rgba(0, 0, 0, .1); padding-left: 12.500px; font-size: 14px; line-height: 50px; color: #999; }
.submit { margin: 20px 0 0 100px; width: 272px; height: 55px; border-radius: 10px; background: #d4755f; color: #fff; font-size: 15.600px; font-weight: 700; display: flex; align-items: center; justify-content: center; gap: 3px; white-space: nowrap; }
.submit span { margin-top: -2px; }
.covered { height: 50px; margin: 35px 0 0 15px; display: flex; align-items: center; font-size: 14px; white-space: nowrap; }
.covered > span:first-child { width: 124px; position: relative; top: -6px; }
.yale { margin-left: 3px; width: 50px; font: 25px/30px "Liberation Serif", serif; color: #0f4d92; position: relative; top: -5px; }
.crest { margin-left: 26px; align-self: flex-end; }

.scrollbar { width: 17px; background: #f1f1f1; display: flex; flex-direction: column; align-items: center; padding: 7px 0 5px; }
.arrow { border: 4px solid transparent; }
.up { border-top: 0; border-bottom-color: #a3a3a3; }
.down { border-bottom: 0; border-top-color: #505050; margin-top: auto; }
.thumb { width: 13px; height: 48px; margin-top: 6px; background: #c1c1c1; }

.whatsapp { position: absolute; left: 36px; top: 643px; width: 57px; height: 40px; border-radius: 5px; background: #25d366; display: grid; place-items: center; }
.chat { position: absolute; left: 1059px; top: 656px; width: 270px; height: 48px; border-radius: 24px; background: #048b27; color: #fff; display: flex; align-items: center; padding-left: 16px; gap: 7px; font-size: 15px; font-weight: 700; letter-spacing: -.2px; white-space: nowrap; box-shadow: 0 6px 18px rgba(0, 0, 0, .25); }
.watermark { position: absolute; left: 1073px; top: 649px; color: rgba(160, 160, 160, .8); white-space: nowrap; }
.watermark p { font-size: 19.100px; line-height: 26px; }
.watermark small { display: block; font-size: 14.400px; line-height: 20px; }

.taskbar { height: 40px; flex: none; background: #1b2230; display: flex; color: #fff; }
.start { width: 48px; display: grid; place-items: center; }
.search { position: relative; width: 288px; background: #f2f2f2; border: 1px solid #b9bbbf; display: flex; align-items: center; padding-left: 11px; color: #333; font-size: 14px; white-space: nowrap; }
.search span { margin-left: 11px; }
.search .art { margin-left: auto; }
.task-view { width: 51px; padding-right: 3px; display: grid; place-items: center; }
.app { position: relative; width: 49px; display: grid; place-items: center; padding-right: 2px; }
.app.open::after { content: ""; position: absolute; bottom: 0; left: 4px; right: 5px; height: 2px; background: #76b9ed; }
.app.current::before { content: ""; position: absolute; inset: 0 1px 0 0; background: #4a4f5a; }
.app.current::after { left: 0; right: 1px; }
.app svg { position: relative; }
.tray { flex: 1; display: flex; align-items: center; font-size: 13px; white-space: nowrap; padding-left: 214px; }
.temp { margin-left: 8px; width: 38px; }
.haze { width: 55px; }
.meet { margin-left: 12px; }
.network { margin-left: 10px; }
.volume { margin-left: 8px; }
.clock { width: 70px; margin-left: 1px; font-size: 11.500px; line-height: 18px; display: flex; flex-direction: column; align-items: center; }
.notice { position: relative; margin-left: 9px; }
.notice b { position: absolute; left: 7px; top: 6px; width: 16px; height: 16px; border: 1px solid #999; border-radius: 50%; background: #333842; font: 600 11px/14px "Open Sans", sans-serif; text-align: center; }
.copilot { margin-left: 20px; }
.peek { margin-left: auto; margin-right: 4px; width: 1px; height: 40px; background: #6d727c; }
</style>
